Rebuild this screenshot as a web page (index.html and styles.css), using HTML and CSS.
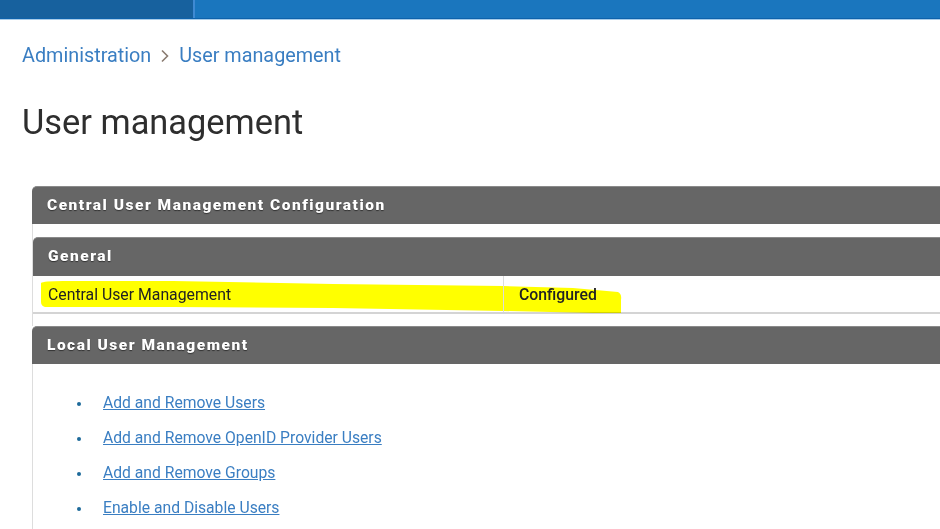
FILE: index.html
```html
<html>
<head>
<meta charset="utf-8">
<title>User management</title>
<link rel="stylesheet" href="styles.css">
</head>
<body>
<div id="topbar">
	<div class="topbarNav"></div>
	<div class="topbarMain"></div>
</div>
<div id="page">
	<div class="breadcrumb">
		<a href="#">Administration</a>
		<svg class="crumbSep" width="10" height="14" viewBox="0 0 10 14"><path d="M2 1.5 L7.5 7 L2 12.5" fill="none" stroke="#8a7b70" stroke-width="1.6"/></svg>
		<a href="#">User management</a>
	</div>
	<h1 class="pageTitle">User management</h1>

	<div class="panel">
		<div class="panelHeader">Central User Management Configuration</div>
		<div class="panelBody outerBody">
			<div class="panel innerPanel">
				<div class="panelHeader">General</div>
				<div class="propRow">
					<svg class="marker" width="600" height="37" viewBox="0 0 600 37" preserveAspectRatio="none"><path d="M8 7 Q10 5 30 5 L140 5 L300 8 L470 10 L540 12 L585 16 Q589 18 588 24 L588 38 L560 37 L470 35 L300 32 L140 31 L12 31 Q8 30 8 26 Z" fill="#ffff00"/></svg>
					<div class="propName">Central User Management</div>
					<div class="propValue">Configured</div>
				</div>
			</div>
		</div>
	</div>

	<div class="panel localPanel">
		<div class="panelHeader">Local User Management</div>
		<div class="panelBody listBody">
			<ul class="linkList">
				<li><a href="#">Add and Remove Users</a></li>
				<li><a href="#">Add and Remove OpenID Provider Users</a></li>
				<li><a href="#">Add and Remove Groups</a></li>
				<li><a href="#">Enable and Disable Users</a></li>
			</ul>
		</div>
	</div>
</div>
</body>
</html>
```

FILE: styles.css
```css
body
{
	margin: 0;
	background-color: #ffffff;
	font-family: Roboto, "Liberation Sans", sans-serif;
	color: #333333;
	overflow: hidden;
}
#topbar
{
	display: flex;
	height: 18px;
	border-bottom: 1px solid #0e62ab;
	box-shadow: 0 1px 0 #a9cdea;
}
.topbarNav
{
	width: 193px;
	background-color: #17619e;
	border-right: 2px solid #3f8ad3;
}
.topbarMain
{
	flex: 1;
	background-color: #1a76be;
}
#page
{
	padding-left: 22px;
}
.breadcrumb
{
	display: flex;
	align-items: center;
	gap: 9px;
	margin-top: 22px;
	height: 28px;
	font-size: 19.8px;
}
.breadcrumb a
{
	color: #3a7ec2;
	text-decoration: none;
}
.crumbSep
{
	margin-top: 1px;
}
.pageTitle
{
	margin: 33px 0 0 0;
	font-size: 34.4px;
	font-weight: 400;
	color: #2e2e2e;
	line-height: 40px;
}
.panel
{
	margin-left: 10px;
	width: 1000px;
}
.pageTitle + .panel
{
	margin-top: 44px;
}
.panelHeader
{
	height: 38px;
	line-height: 36px;
	padding-left: 15px;
	background-color: #666666;
	border-top-left-radius: 5px;
	border-top: 1px solid #8a8a8a;
	box-sizing: border-box;
	color: #ffffff;
	font-size: 15.5px;
	font-weight: 900;
	letter-spacing: 1.5px;
	text-shadow: 0 1px 1px #333333;
}
.panelBody
{
	border-left: 1px solid #dddddd;
}
.outerBody
{
	padding: 13px 0 12px 0;
}
.innerPanel
{
	margin-left: 0;
	width: auto;
}
.innerPanel .panelHeader
{
	height: 39px;
	line-height: 37px;
}
.propRow
{
	position: relative;
	display: flex;
	height: 36px;
	border-bottom: 2px solid #d4d4d4;
	font-size: 15.8px;
	color: #222222;
}
.marker
{
	position: absolute;
	left: 0;
	top: 0;
	mix-blend-mode: multiply;
}
.propName
{
	position: relative;
	width: 455px;
	padding-left: 15px;
	line-height: 38px;
	border-right: 1px solid #dcdcdc;
}
.propValue
{
	position: relative;
	padding-left: 15px;
	line-height: 38px;
	font-weight: 500;
}
.localPanel
{
	margin-top: 0;
}
.listBody
{
	padding: 27px 0 10px 0;
}
.linkList
{
	margin: 0;
	padding-left: 70px;
	list-style: none;
}
.linkList li
{
	position: relative;
	height: 35px;
	line-height: 23px;
	font-size: 15.7px;
}
.linkList li::before
{
	content: "";
	position: absolute;
	left: -26px;
	top: 11px;
	width: 4px;
	height: 4px;
	border-radius: 2px;
	background-color: #1d6a9a;
}
.linkList a
{
	color: #3a7ec2;
	text-decoration: underline;
}
```
